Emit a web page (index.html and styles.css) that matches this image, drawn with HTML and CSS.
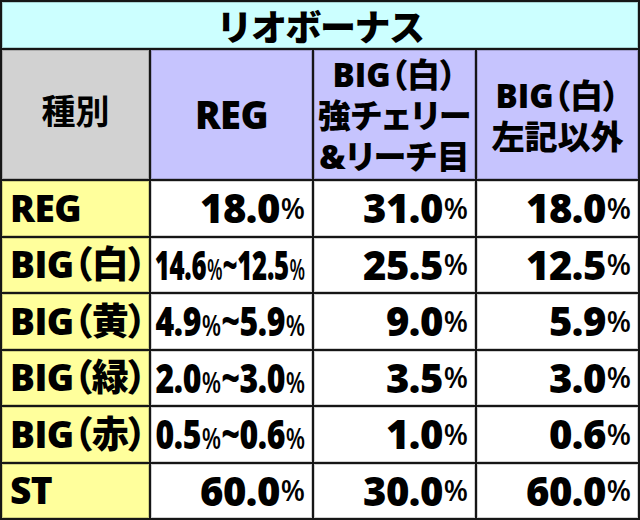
FILE: index.html
```html
<!DOCTYPE html>
<html lang="ja">
<head>
<meta charset="utf-8">
<link rel="stylesheet" href="styles.css">
</head>
<body>
<div class="table">
  <div class="cell title"><span class="title-text">リオボーナス</span></div>

  <div class="cell head gray">種別</div>
  <div class="cell head purple big">REG</div>
  <div class="cell head purple small"><span>BIG（白）</span><span>強チェリー</span><span>&amp;リーチ目</span></div>
  <div class="cell head purple small"><span>BIG（白）</span><span>左記以外</span></div>

  <div class="cell label">REG</div>
  <div class="cell num">18.0<span class="pct">%</span></div>
  <div class="cell num">31.0<span class="pct">%</span></div>
  <div class="cell num">18.0<span class="pct">%</span></div>

  <div class="cell label">BIG（白）</div>
  <div class="cell num"><span class="rng rng-wide">14.6<span class="pct">%</span>~12.5<span class="pct">%</span></span></div>
  <div class="cell num">25.5<span class="pct">%</span></div>
  <div class="cell num">12.5<span class="pct">%</span></div>

  <div class="cell label">BIG（黄）</div>
  <div class="cell num"><span class="rng">4.9<span class="pct">%</span>~5.9<span class="pct">%</span></span></div>
  <div class="cell num">9.0<span class="pct">%</span></div>
  <div class="cell num">5.9<span class="pct">%</span></div>

  <div class="cell label">BIG（緑）</div>
  <div class="cell num"><span class="rng">2.0<span class="pct">%</span>~3.0<span class="pct">%</span></span></div>
  <div class="cell num">3.5<span class="pct">%</span></div>
  <div class="cell num">3.0<span class="pct">%</span></div>

  <div class="cell label">BIG（赤）</div>
  <div class="cell num"><span class="rng">0.5<span class="pct">%</span>~0.6<span class="pct">%</span></span></div>
  <div class="cell num">1.0<span class="pct">%</span></div>
  <div class="cell num">0.6<span class="pct">%</span></div>

  <div class="cell label">ST</div>
  <div class="cell num">60.0<span class="pct">%</span></div>
  <div class="cell num">30.0<span class="pct">%</span></div>
  <div class="cell num">60.0<span class="pct">%</span></div>
</div>
</body>
</html>
```

FILE: styles.css
```css
html, body {
  margin: 0;
  padding: 0;
  background: #ffffff;
}

.table {
  width: 640px;
  height: 520px;
  box-sizing: border-box;
  padding: 2px;
  background: #161616;
  display: grid;
  grid-template-columns: 147px 161px 161px 161px;
  grid-template-rows: 46px 129px repeat(6, 1fr);
  gap: 2px;
  font-family: "Open Sans", "Noto Sans CJK JP", sans-serif;
  font-weight: 800;
  color: #000;
  font-feature-settings: "palt";
}

.cell {
  background: #ffffff;
  display: flex;
  align-items: center;
  box-shadow: inset 0 0 0 1px rgba(0, 0, 0, 0.18);
  overflow: hidden;
  white-space: nowrap;
  line-height: 1.1;
}

.title {
  grid-column: 1 / span 4;
  background: #ccffff;
  justify-content: center;
  overflow: visible;
}

.title-text {
  font-family: "Noto Sans CJK JP", sans-serif;
  font-weight: 800;
  font-size: 36px;
  line-height: 36px;
  height: 36px;
  display: block;
  font-feature-settings: normal;
  letter-spacing: -1.5px;
}

.head {
  justify-content: center;
  font-size: 34px;
}

.gray {
  background: #d2d2d2;
  font-family: "Noto Sans CJK JP", sans-serif;
  font-weight: 700;
  padding-bottom: 10px;
  box-sizing: border-box;
}

.purple {
  background: #c6c4fe;
}

.big {
  font-size: 38px;
  letter-spacing: -0.5px;
}

.small {
  flex-direction: column;
  font-size: 33px;
  line-height: 41px;
  padding-top: 2px;
  box-sizing: border-box;
}

.label {
  background: #ffff9c;
  font-size: 37px;
  padding-left: 8px;
  letter-spacing: -0.5px;
}

.num {
  justify-content: flex-end;
  font-size: 40px;
  padding-right: 7px;
  letter-spacing: -0.5px;
}

.pct {
  font-size: 28px;
  font-weight: 600;
  letter-spacing: 0;
  margin-left: 1px;
}

.rng {
  display: inline-block;
  transform: scaleX(0.8);
  transform-origin: right center;
}

.rng-wide {
  transform: scaleX(0.645);
}
```
